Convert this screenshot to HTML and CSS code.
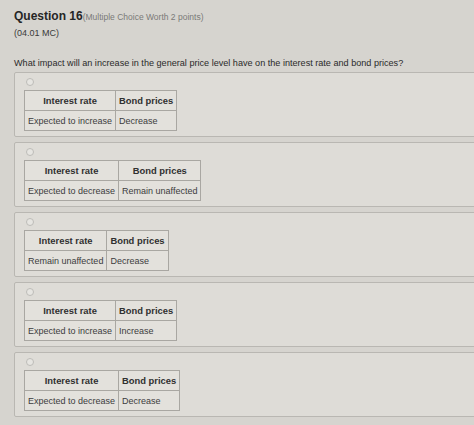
FILE: index.html
```html
<!DOCTYPE html>
<html>
<head>
    <meta charset="utf-8">
    <link rel="stylesheet" href="styles.css">
</head>
<body>
    <div class="question">
        <h2 class="title">Question 16<span class="worth">(Multiple Choice Worth 2 points)</span></h2>
        <div class="code">(04.01 MC)</div>
        <p class="prompt">What impact will an increase in the general price level have on the interest rate and bond prices?</p>

        <div class="options">
            <div class="option">
                <span class="radio"></span>
                <table class="answer">
                    <tr><th>Interest rate</th><th>Bond prices</th></tr>
                    <tr><td>Expected to increase</td><td>Decrease</td></tr>
                </table>
            </div>
            <div class="option">
                <span class="radio"></span>
                <table class="answer">
                    <tr><th>Interest rate</th><th>Bond prices</th></tr>
                    <tr><td>Expected to decrease</td><td>Remain unaffected</td></tr>
                </table>
            </div>
            <div class="option">
                <span class="radio"></span>
                <table class="answer">
                    <tr><th>Interest rate</th><th>Bond prices</th></tr>
                    <tr><td>Remain unaffected</td><td>Decrease</td></tr>
                </table>
            </div>
            <div class="option">
                <span class="radio"></span>
                <table class="answer">
                    <tr><th>Interest rate</th><th>Bond prices</th></tr>
                    <tr><td>Expected to increase</td><td>Increase</td></tr>
                </table>
            </div>
            <div class="option">
                <span class="radio"></span>
                <table class="answer">
                    <tr><th>Interest rate</th><th>Bond prices</th></tr>
                    <tr><td>Expected to decrease</td><td>Decrease</td></tr>
                </table>
            </div>
        </div>
    </div>
</body>
</html>
```

FILE: styles.css
```css
html, body {
    margin: 0;
    height: 100%;
    overflow: hidden;
}

body {
    background-color: #d6d4cf;
    font-family: "Liberation Sans", Arial, sans-serif;
    color: #2e2e2e;
}

.question {
    padding: 9px 0 0 14px;
}

.title {
    margin: 0;
    font-size: 12px;
    font-weight: bold;
    line-height: 14px;
    color: #262626;
}

.worth {
    font-size: 8.5px;
    font-weight: normal;
    color: #7a7a78;
}

.code {
    margin-top: 3px;
    font-size: 9px;
    line-height: 12px;
    color: #3a3a3a;
}

.prompt {
    margin: 18px 0 0 0;
    font-size: 9.1px;
    line-height: 12px;
    color: #2a2a2a;
}

.options {
    display: flex;
    flex-direction: column;
    gap: 5px;
    margin-top: 3px;
    margin-right: -12px;
}

.option {
    background-color: #dedcd7;
    border: 1px solid #b9b7b2;
    border-radius: 2px;
    padding: 5px 8px 5px 9px;
}

.radio {
    display: block;
    width: 6px;
    height: 6px;
    margin: 0 0 4px 2px;
    border: 1px solid #bdbcb8;
    border-radius: 50%;
    background-color: #e6e5e1;
}

.answer {
    border-collapse: collapse;
    background-color: #e3e1dc;
    font-size: 9px;
}

.answer th,
.answer td {
    border: 1px solid #a9a7a2;
    padding: 0 3px;
    height: 19px;
    white-space: nowrap;
}

.answer th {
    font-size: 9.4px;
    font-weight: bold;
    text-align: center;
    color: #303030;
}

.answer td {
    text-align: left;
    color: #3c3c3c;
}
```
